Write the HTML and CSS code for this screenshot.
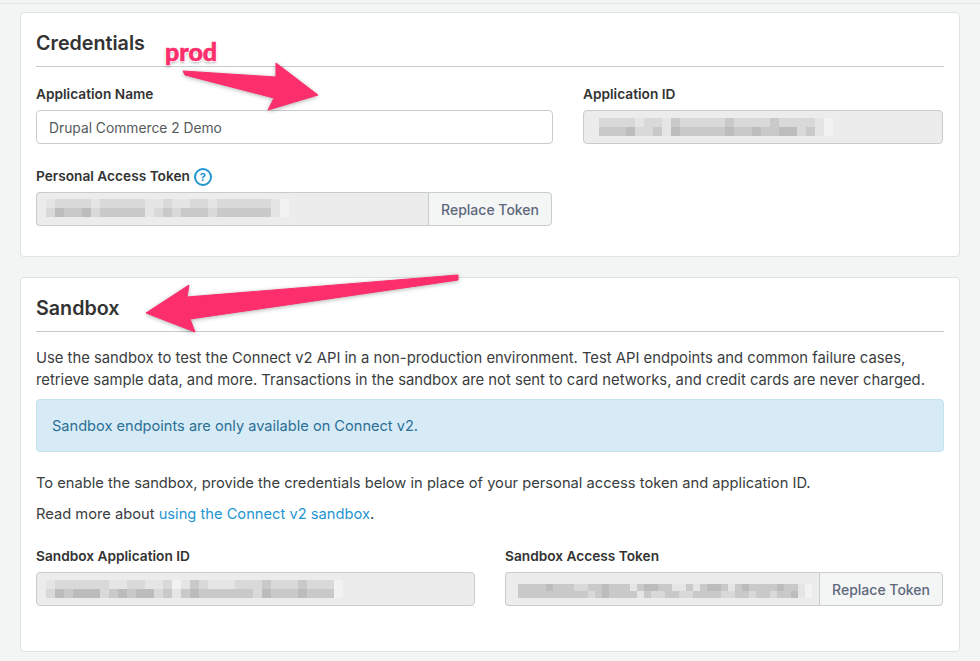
FILE: index.html
```html
<!DOCTYPE html>
<html>
<head>
    <title>Credentials</title>
    <link rel="stylesheet" href="styles.css">
</head>
<body>
    <div class="page">
        <div class="card">
            <h2>Credentials</h2>
            <div class="form-grid creds-grid">
                <div class="form-group">
                    <label>Application Name</label>
                    <input class="field" type="text" value="Drupal Commerce 2 Demo">
                </div>
                <div class="form-group">
                    <label>Application ID</label>
                    <div class="field readonly app-id">
                        <div class="pixels" data-size="9" data-rows="ddddeddecdddddcddddcddddef|cccbddcebcccccbccbccbbdcef"></div>
                    </div>
                </div>
                <div class="form-group token-short">
                    <label class="help-label">Personal Access Token <span class="help">?</span></label>
                    <div class="token-group">
                        <div class="field readonly">
                            <div class="pixels" data-size="9" data-rows="eddddedddddeedeeddeddddddef|dbccbdcccccedcdcccdccccccef"></div>
                        </div>
                        <button>Replace Token</button>
                    </div>
                </div>
            </div>
        </div>

        <div class="card sandbox-card">
            <h2>Sandbox</h2>
            <p class="intro">Use the sandbox to test the Connect v2 API in a non-production environment. Test API endpoints and common failure cases, retrieve sample data, and more. Transactions in the sandbox are not sent to card networks, and credit cards are never charged.</p>
            <div class="alert">Sandbox endpoints are only available on Connect v2.</div>
            <p class="enable">To enable the sandbox, provide the credentials below in place of your personal access token and application ID.</p>
            <p class="read-more">Read more about <a href="#">using the Connect v2 sandbox</a>.</p>
            <div class="form-grid sandbox-grid">
                <div class="form-group">
                    <label>Sandbox Application ID</label>
                    <div class="field readonly sandbox-id">
                        <div class="pixels" data-size="9" data-rows="eddddddeeddeedfecdeeedddcdddcdddf|dbcbbbdcbcbbdcecbccccccdbcccbcccf"></div>
                    </div>
                </div>
                <div class="form-group">
                    <label>Sandbox Access Token</label>
                    <div class="token-group">
                        <div class="field readonly wide-pixels">
                            <div class="pixels" data-size="7" data-rows="ccccbcccddccbccceCbbcceeceCbbcecbccccbccef|ccccccccccdcbccccecddccddccccddccdccdccbef"></div>
                        </div>
                        <button>Replace Token</button>
                    </div>
                </div>
            </div>
        </div>

        <svg class="arrows" width="980" height="661">
            <polygon points="183,71 276,77 276,63 318,95 268,110 274,98 185,75"/>
            <polygon points="458,275 187,297 189,285 146,313 195,332 190,319 458,280"/>
        </svg>
        <div class="prod-note">prod</div>
    </div>
    <script src="pixels.js"></script>
</body>
</html>
```

FILE: styles.css
```css
* { margin: 0; padding: 0; box-sizing: border-box; }
body { font-family: Inter, 'Liberation Sans', sans-serif; font-size: 14.7px; color: #3a3d40; background: #f3f5f5; }
.page { position: relative; height: 661px; padding: 12px 20px 0; overflow: hidden; }
.page::before { content: ""; position: absolute; left: 0; right: 0; top: 3px; height: 1px; background: #e4e6e6; }
.card { background: white; border: 1px solid #dfe2e2; border-radius: 4px; padding: 0 15px 30px; margin-bottom: 20px; }
.sandbox-card { padding-bottom: 45px; }
h2 { font-size: 19.7px; font-weight: 600; line-height: 24px; color: #333; padding: 18px 0 11px; border-bottom: 1px solid #c4cacd; }
label { display: block; font-size: 13.7px; font-weight: 600; line-height: 20px; color: #333; margin-bottom: 6px; }
.help-label { display: flex; align-items: center; gap: 4px; height: 20px; }
.form-grid { display: grid; column-gap: 30px; margin-top: 17px; }
.creds-grid { grid-template-columns: 517px 360px; row-gap: 22px; }
.sandbox-grid { grid-template-columns: 439px 438px; margin-top: 21px; }
.token-short { margin-right: 1px; }
.field { display: block; width: 100%; height: 34px; padding: 2px 12px 0; border: 1px solid #c8cccf; border-radius: 4px; background: white; font-family: inherit; font-size: 13.8px; color: #55595c; }
.readonly { background: #ececec; padding: 6px 9px; }
.app-id { padding: 7px 15px; }
.sandbox-id { padding-top: 7px; }
.wide-pixels { padding: 11px 12px; }
.pixels { display: grid; width: max-content; }
.pixels span { display: block; }
.token-group { display: flex; }
.token-group .field { flex: 1; min-width: 0; border-radius: 4px 0 0 4px; border-right: none; overflow: hidden; }
button { flex: none; height: 34px; padding: 0 12px; border: 1px solid #c8cccf; border-radius: 0 4px 4px 0; background: #f4f5f5; font-family: inherit; font-size: 14px; font-weight: 500; color: #5d687c; }
.help { flex: none; width: 18px; height: 18px; margin-top: 2px; border: 2px solid #2196d3; border-radius: 50%; font-size: 11px; font-weight: 700; line-height: 14px; text-align: center; color: #2196d3; }
.intro { margin-top: 15px; line-height: 22px; font-size: 14.8px; }
.alert { margin-top: 8px; height: 53px; padding: 1px 15px 0; line-height: 51px; font-size: 14.6px; background: #d7ebf6; border: 1px solid #c3e1f0; border-radius: 4px; color: #2b6f95; }
.enable { margin-top: 20px; line-height: 22px; }
.read-more { margin-top: 9px; line-height: 22px; }
a { color: #1f95cf; text-decoration: none; }
.arrows { position: absolute; left: 0; top: 0; pointer-events: none; filter: drop-shadow(0 1px 2px rgba(0,0,0,0.3)); }
.arrows polygon { fill: #fc2e6b; stroke: #fc2e6b; stroke-width: 1; stroke-linejoin: round; }
.prod-note { position: absolute; left: 165px; top: 35px; font-family: Lato, sans-serif; font-size: 25px; font-weight: 900; line-height: 32px; color: #fc2e6b; -webkit-text-stroke: 0.6px #fc2e6b; text-shadow: 1px 1px 0 white, -1px -1px 0 white, 1px -1px 0 white, -1px 1px 0 white, 0 2px 3px rgba(0,0,0,0.35); }
```

FILE: pixels.js
```js
// blurred out secrets, one string per row, each letter is a grey level
var greys = { b: '#bcbcbc', c: '#c9c9c9', d: '#d9d9d9', e: '#e5e5e5', f: '#f2f2f2' };

document.querySelectorAll('.pixels').forEach(function (box) {
    var size = box.dataset.size + 'px';
    var rows = box.dataset.rows.toLowerCase().split('|');
    box.style.gridTemplateColumns = 'repeat(' + rows[0].length + ', ' + size + ')';
    box.style.gridAutoRows = size;
    rows.forEach(function (row) {
        for (var i = 0; i < row.length; i++) {
            var cell = document.createElement('span');
            cell.style.background = greys[row[i]];
            box.appendChild(cell);
        }
    });
});
```
